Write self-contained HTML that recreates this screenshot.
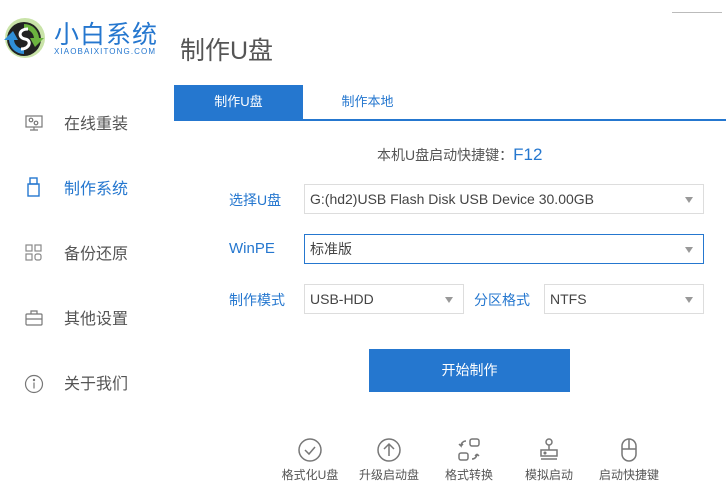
<!DOCTYPE html>
<html><head><meta charset="utf-8"><style>
*{margin:0;padding:0;box-sizing:border-box}
body{width:726px;height:487px;background:#fff;position:relative;overflow:hidden;font-family:"Liberation Sans","Noto Sans CJK SC",sans-serif;color:#555}
.a{position:absolute}
.nav{font-size:16px;color:#555}
.sel{position:absolute;height:30px;border:1px solid #ddd;font-size:14px;color:#444;padding-left:5px;line-height:28px}
.sel:after{content:"";position:absolute;right:10px;top:12px;border-left:4.5px solid transparent;border-right:4.5px solid transparent;border-top:6px solid #999}
.lbl{position:absolute;font-size:14px;color:#2577cf}
.bi{position:absolute;top:437px;width:26px;height:26px}
.bt{position:absolute;top:466px;font-size:12px;color:#555;width:90px;text-align:center}
</style></head><body>
<svg class="a" style="left:4px;top:16px" width="42" height="44" viewBox="0 0 42 44">
<circle cx="21" cy="22" r="20" fill="#c9e3a8"/>
<circle cx="20" cy="23" r="17" fill="#222"/>
<path d="M20 8 A15 15 0 0 1 35 22 L40 22 L31 31 L26 22 L30 22 A10 10 0 0 0 20 13Z" fill="#6cb33f"/>
<path d="M20 38 A15 15 0 0 1 5 24 L0 24 L9 15 L14 24 L10 24 A10 10 0 0 0 20 33Z" fill="#2f8fd8"/>
<path d="M24 13 C14 13 14 22 21 23 C28 24 26 33 17 33" stroke="#fff" stroke-width="3" fill="none"/>
</svg>
<div class="a" style="left:54px;top:15px;font-size:25px;color:#2577cf;letter-spacing:1px">小白系统</div>
<div class="a" style="left:54px;top:47px;font-size:8px;color:#2577cf;letter-spacing:1.1px">XIAOBAIXITONG.COM</div>
<div class="a" style="left:672px;top:12px;width:50px;height:1px;background:#bbb"></div>
<div class="a" style="left:180px;top:31px;font-size:25px;color:#555">制作U盘</div>

<svg class="a" style="left:25px;top:114px" width="18" height="18" viewBox="0 0 18 18" fill="none" stroke="#777" stroke-width="1.2"><rect x="1" y="2" width="16" height="11"/><circle cx="6" cy="6" r="1.8"/><circle cx="11" cy="9" r="1.8"/><path d="M9 13v3M5 16h8"/></svg>
<div class="a nav" style="left:64px;top:110px">在线重装</div>
<svg class="a" style="left:27px;top:177px" width="14" height="20" viewBox="0 0 14 20" fill="none" stroke="#2577cf" stroke-width="1.4"><rect x="3" y="1" width="7" height="6"/><rect x="1" y="7" width="11" height="12"/></svg>
<div class="a nav" style="left:64px;top:175px;color:#2577cf">制作系统</div>
<svg class="a" style="left:25px;top:244px" width="18" height="18" viewBox="0 0 18 18" fill="none" stroke="#888" stroke-width="1.2"><rect x="1" y="1" width="6" height="6"/><rect x="10" y="1" width="6" height="6"/><rect x="1" y="10" width="6" height="6"/><rect x="10" y="10" width="6" height="6" rx="2"/></svg>
<div class="a nav" style="left:64px;top:240px">备份还原</div>
<svg class="a" style="left:25px;top:309px" width="18" height="18" viewBox="0 0 18 18" fill="none" stroke="#777" stroke-width="1.2"><rect x="1" y="5" width="16" height="11" rx="1"/><path d="M6 5V2h6v3M1 10h16"/></svg>
<div class="a nav" style="left:64px;top:305px">其他设置</div>
<svg class="a" style="left:24px;top:374px" width="20" height="20" viewBox="0 0 20 20" fill="none" stroke="#777" stroke-width="1.2"><circle cx="10" cy="10" r="8.5"/><path d="M10 8.5v6"/><circle cx="10" cy="6" r=".6" fill="#777"/></svg>
<div class="a nav" style="left:64px;top:370px">关于我们</div>

<div class="a" style="left:174px;top:85px;width:129px;height:35px;background:#2577cf;color:#fff;font-size:13px;text-align:center;line-height:34px">制作U盘</div>
<div class="a" style="left:303px;top:85px;width:129px;height:35px;color:#2577cf;font-size:13px;text-align:center;line-height:34px">制作本地</div>
<div class="a" style="left:174px;top:119px;width:552px;height:2px;background:#2577cf"></div>

<div class="a" style="left:377px;top:145px;font-size:14px;color:#555">本机U盘启动快捷键：<span style="color:#2577cf;font-size:17px">F12</span></div>

<div class="lbl" style="left:229px;top:190px">选择U盘</div>
<div class="sel" style="left:304px;top:184px;width:400px">G:(hd2)USB Flash Disk USB Device 30.00GB</div>
<div class="lbl" style="left:229px;top:240px;font-size:15px">WinPE</div>
<div class="sel" style="left:304px;top:234px;width:400px;border-color:#2577cf">标准版</div>
<div class="lbl" style="left:229px;top:290px">制作模式</div>
<div class="sel" style="left:304px;top:284px;width:160px">USB-HDD</div>
<div class="lbl" style="left:474px;top:290px">分区格式</div>
<div class="sel" style="left:544px;top:284px;width:160px">NTFS</div>

<div class="a" style="left:369px;top:349px;width:201px;height:43px;background:#2577cf;color:#fff;font-size:14px;text-align:center;line-height:43px">开始制作</div>

<svg class="bi" style="left:297px" viewBox="0 0 26 26" fill="none" stroke="#777" stroke-width="1.5"><circle cx="13" cy="13" r="11"/><path d="M8 13l4 4 6-7"/></svg>
<svg class="bi" style="left:376px" viewBox="0 0 26 26" fill="none" stroke="#777" stroke-width="1.5"><circle cx="13" cy="13" r="11"/><path d="M13 19V7M8 12l5-5 5 5"/></svg>
<svg class="bi" style="left:456px" viewBox="0 0 26 26" fill="none" stroke="#777" stroke-width="1.5"><rect x="14" y="2" width="9" height="7" rx="2"/><rect x="3" y="16" width="9" height="7" rx="2"/><path d="M10 4a5 5 0 0 0-5 5l-2-2M5 9l2-2M16 22a5 5 0 0 0 5-5M21 17l-2 2M21 17l2 2"/></svg>
<svg class="bi" style="left:536px" viewBox="0 0 26 26" fill="none" stroke="#777" stroke-width="1.5"><circle cx="13" cy="5" r="3"/><path d="M13 8v5M5 13h16v6H5zM5 22h16"/><circle cx="9" cy="16" r=".8" fill="#777"/></svg>
<svg class="bi" style="left:616px" viewBox="0 0 26 26" fill="none" stroke="#777" stroke-width="1.5"><rect x="6" y="2" width="14" height="22" rx="7"/><path d="M6 12h14M13 2v10"/></svg>
<div class="bt" style="left:265px">格式化U盘</div>
<div class="bt" style="left:344px">升级启动盘</div>
<div class="bt" style="left:424px">格式转换</div>
<div class="bt" style="left:504px">模拟启动</div>
<div class="bt" style="left:584px">启动快捷键</div>
</body></html>
